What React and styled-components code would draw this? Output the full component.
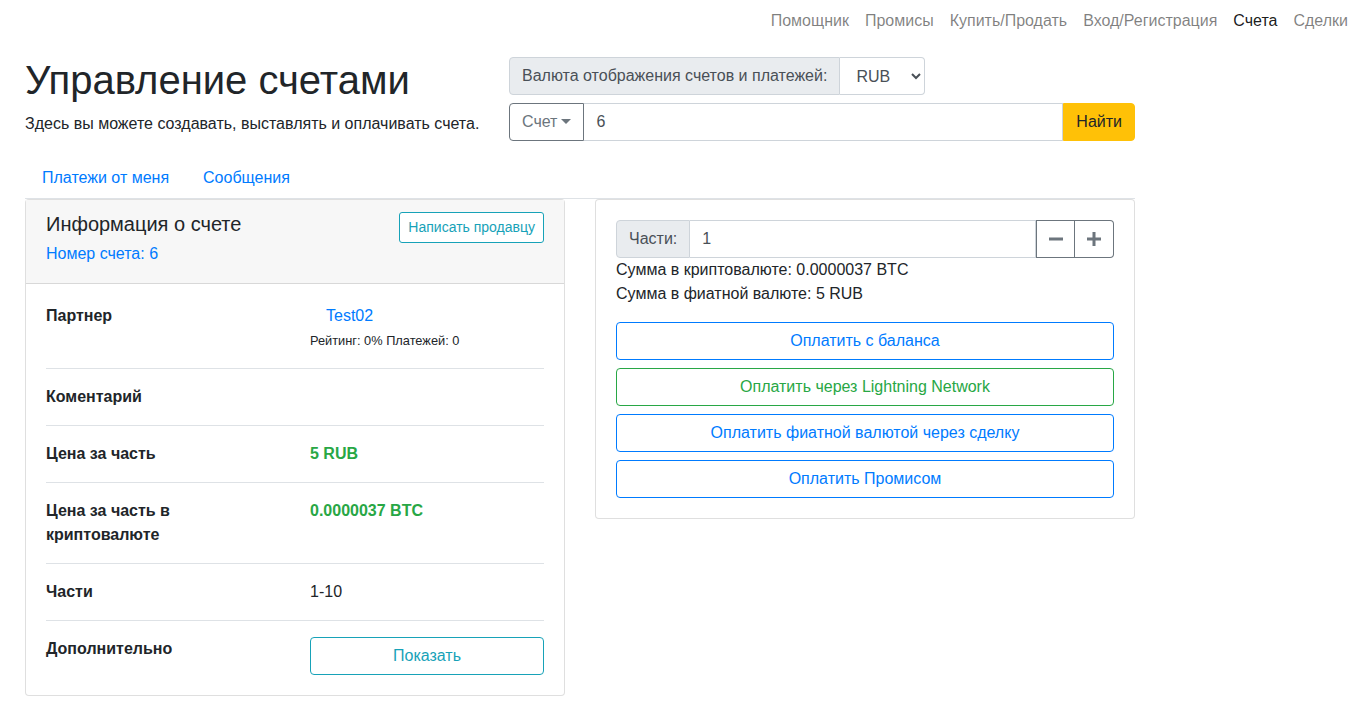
import React from "react";
import styled, { createGlobalStyle } from "styled-components";

const GlobalStyle = createGlobalStyle`
  body {
    margin: 0;
    font-family: "Liberation Sans", Arial, sans-serif;
    font-size: 16px;
    line-height: 1.5;
    color: #212529;
    background: #ffffff;
  }
  * {
    box-sizing: border-box;
  }
`;

const Navbar = styled.nav`
  display: flex;
  justify-content: flex-end;
  height: 40px;
  padding: 1px 6px 0 0;
`;

const NavLink = styled.a`
  padding: 8px 8px;
  color: ${(p) => (p.active ? "rgba(0, 0, 0, 0.9)" : "rgba(0, 0, 0, 0.5)")};
  text-decoration: none;
  cursor: pointer;
`;

const Page = styled.div`
  width: 1110px;
  margin-left: 25px;
`;

const Header = styled.div`
  display: flex;
  margin-top: 16px;
`;

const HeaderLeft = styled.div`
  width: 484px;
`;

const Title = styled.h1`
  margin: 0 0 8px;
  font-size: 40px;
  font-weight: 500;
  line-height: 1.2;
`;

const Lead = styled.p`
  margin: 0;
  font-size: 16px;
`;

const HeaderRight = styled.div`
  flex: 1;
  padding-top: 1px;
  display: flex;
  flex-direction: column;
  align-items: flex-start;
  gap: 8px;
`;

const InputGroup = styled.div`
  display: flex;
  width: ${(p) => (p.full ? "100%" : "auto")};
  height: 38px;
`;

const Addon = styled.span`
  display: flex;
  align-items: center;
  padding: 0 12px;
  background: #e9ecef;
  border: 1px solid #ced4da;
  border-radius: 4px 0 0 4px;
  color: #495057;
  white-space: nowrap;
`;

const Select = styled.select`
  width: 85px;
  height: 38px;
  padding: 0 8px 0 12px;
  border: 1px solid #ced4da;
  border-left: none;
  border-radius: 0 4px 4px 0;
  background: #ffffff;
  color: #495057;
  font-family: inherit;
  font-size: 16px;
`;

const DropButton = styled.button`
  display: flex;
  align-items: center;
  gap: 4px;
  padding: 0 12px;
  background: #ffffff;
  border: 1px solid #6c757d;
  border-radius: 4px 0 0 4px;
  color: #6c757d;
  font-family: inherit;
  font-size: 16px;
`;

const Caret = styled.span`
  width: 0;
  height: 0;
  margin-top: -2px;
  border-top: 5px solid #6c757d;
  border-left: 5px solid transparent;
  border-right: 5px solid transparent;
`;

const TextInput = styled.input`
  flex: 1;
  min-width: 0;
  height: 38px;
  padding: 0 12px;
  border: 1px solid #ced4da;
  border-left: ${(p) => (p.noLeft ? "none" : "1px solid #ced4da")};
  color: #495057;
  font-family: inherit;
  font-size: 16px;
  outline: none;
`;

const FindButton = styled.button`
  padding: 0 12px;
  background: #ffc107;
  border: 1px solid #ffc107;
  border-radius: 0 4px 4px 0;
  color: #212529;
  font-family: inherit;
  font-size: 16px;
`;

const Tabs = styled.div`
  display: flex;
  margin-top: 16px;
  border-bottom: 1px solid #dee2e6;
`;

const Tab = styled.a`
  padding: 9px 17px 8px;
  color: #007bff;
  text-decoration: none;
`;

const Columns = styled.div`
  display: flex;
  align-items: flex-start;
  gap: 30px;
`;

const Card = styled.div`
  width: 540px;
  border: 1px solid rgba(0, 0, 0, 0.125);
  border-radius: 4px;
  background: #ffffff;
`;

const CardHeader = styled.div`
  display: flex;
  justify-content: space-between;
  align-items: flex-start;
  padding: 12px 20px 17px;
  background: #f7f7f7;
  border-bottom: 1px solid rgba(0, 0, 0, 0.125);
`;

const CardTitle = styled.div`
  font-size: 20px;
  line-height: 1.2;
  font-weight: 500;
  margin-bottom: 6px;
`;

const InvoiceNumber = styled.div`
  color: #007bff;
`;

const SmallOutline = styled.button`
  padding: 4px 8px;
  background: #ffffff;
  border: 1px solid #17a2b8;
  border-radius: 3px;
  color: #17a2b8;
  font-family: inherit;
  font-size: 14px;
  line-height: 1.5;
`;

const CardBody = styled.div`
  padding: 20px;
`;

const InfoRow = styled.div`
  display: flex;
  padding: ${(p) => (p.first ? "0 0 16px" : p.last ? "16px 0 0" : "16px 0")};
  border-bottom: ${(p) => (p.last ? "none" : "1px solid #dee2e6")};
`;

const Label = styled.div`
  width: 264px;
  padding-right: 30px;
  font-weight: 700;
`;

const Value = styled.div`
  flex: 1;
  color: ${(p) => p.color || "#212529"};
  font-weight: ${(p) => (p.bold ? 700 : 400)};
`;

const PartnerLink = styled.a`
  display: block;
  padding-left: 16px;
  color: #007bff;
  text-decoration: none;
`;

const Rating = styled.div`
  font-size: 12.8px;
  line-height: 24px;
  padding-top: 1px;
  margin-bottom: -1px;
`;

const BlockButton = styled.button`
  display: block;
  width: 100%;
  height: 38px;
  padding: 0 12px;
  background: #ffffff;
  border: 1px solid ${(p) => p.color};
  border-radius: 4px;
  color: ${(p) => p.color};
  font-family: inherit;
  font-size: 16px;
  cursor: pointer;
`;

const StepButton = styled.button`
  width: 39px;
  display: flex;
  align-items: center;
  justify-content: center;
  background: #ffffff;
  border: 1px solid #6c757d;
  border-left: ${(p) => (p.joined ? "none" : "1px solid #6c757d")};
  border-radius: ${(p) => (p.last ? "0 4px 4px 0" : "0")};
  padding: 0;
`;

const SumLine = styled.div`
  line-height: 24px;
`;

const PayList = styled.div`
  display: flex;
  flex-direction: column;
  gap: 8px;
  margin-top: 16px;
`;

const MinusIcon = () => (
  <svg width="14" height="14" viewBox="0 0 14 14">
    <rect x="0" y="5.5" width="14" height="3" fill="#6c757d" />
  </svg>
);

const PlusIcon = () => (
  <svg width="14" height="14" viewBox="0 0 14 14">
    <rect x="0" y="5.5" width="14" height="3" fill="#6c757d" />
    <rect x="5.5" y="0" width="3" height="14" fill="#6c757d" />
  </svg>
);

const navItems = [
  "Помощник",
  "Промисы",
  "Купить/Продать",
  "Вход/Регистрация",
  "Счета",
  "Сделки",
];

const payButtons = [
  { text: "Оплатить с баланса", color: "#007bff" },
  { text: "Оплатить через Lightning Network", color: "#28a745" },
  { text: "Оплатить фиатной валютой через сделку", color: "#007bff" },
  { text: "Оплатить Промисом", color: "#007bff" },
];

export default function App() {
  return (
    <>
      <GlobalStyle />
      <Navbar>
        {navItems.map((item) => (
          <NavLink key={item} active={item === "Счета"}>
            {item}
          </NavLink>
        ))}
      </Navbar>
      <Page>
        <Header>
          <HeaderLeft>
            <Title>Управление счетами</Title>
            <Lead>Здесь вы можете создавать, выставлять и оплачивать счета.</Lead>
          </HeaderLeft>
          <HeaderRight>
            <InputGroup>
              <Addon>Валюта отображения счетов и платежей:</Addon>
              <Select defaultValue="RUB">
                <option>RUB</option>
                <option>USD</option>
              </Select>
            </InputGroup>
            <InputGroup full>
              <DropButton>
                Счет <Caret />
              </DropButton>
              <TextInput noLeft defaultValue="6" />
              <FindButton>Найти</FindButton>
            </InputGroup>
          </HeaderRight>
        </Header>

        <Tabs>
          <Tab>Платежи от меня</Tab>
          <Tab>Сообщения</Tab>
        </Tabs>

        <Columns>
          <Card>
            <CardHeader>
              <div>
                <CardTitle>Информация о счете</CardTitle>
                <InvoiceNumber>Номер счета: 6</InvoiceNumber>
              </div>
              <SmallOutline>Написать продавцу</SmallOutline>
            </CardHeader>
            <CardBody>
              <InfoRow first>
                <Label>Партнер</Label>
                <Value>
                  <PartnerLink>Test02</PartnerLink>
                  <Rating>Рейтинг: 0% Платежей: 0</Rating>
                </Value>
              </InfoRow>
              <InfoRow>
                <Label>Коментарий</Label>
                <Value />
              </InfoRow>
              <InfoRow>
                <Label>Цена за часть</Label>
                <Value bold color="#28a745">
                  5 RUB
                </Value>
              </InfoRow>
              <InfoRow>
                <Label>
                  Цена за часть в<br />
                  криптовалюте
                </Label>
                <Value bold color="#28a745">
                  0.0000037 BTC
                </Value>
              </InfoRow>
              <InfoRow>
                <Label>Части</Label>
                <Value>1-10</Value>
              </InfoRow>
              <InfoRow last>
                <Label>Дополнительно</Label>
                <Value>
                  <BlockButton color="#17a2b8">Показать</BlockButton>
                </Value>
              </InfoRow>
            </CardBody>
          </Card>

          <Card>
            <CardBody>
              <InputGroup full>
                <Addon>Части:</Addon>
                <TextInput noLeft defaultValue="1" />
                <StepButton>
                  <MinusIcon />
                </StepButton>
                <StepButton joined last>
                  <PlusIcon />
                </StepButton>
              </InputGroup>
              <SumLine>Сумма в криптовалюте: 0.0000037 BTC</SumLine>
              <SumLine>Сумма в фиатной валюте: 5 RUB</SumLine>
              <PayList>
                {payButtons.map((b) => (
                  <BlockButton key={b.text} color={b.color}>
                    {b.text}
                  </BlockButton>
                ))}
              </PayList>
            </CardBody>
          </Card>
        </Columns>
      </Page>
    </>
  );
}
